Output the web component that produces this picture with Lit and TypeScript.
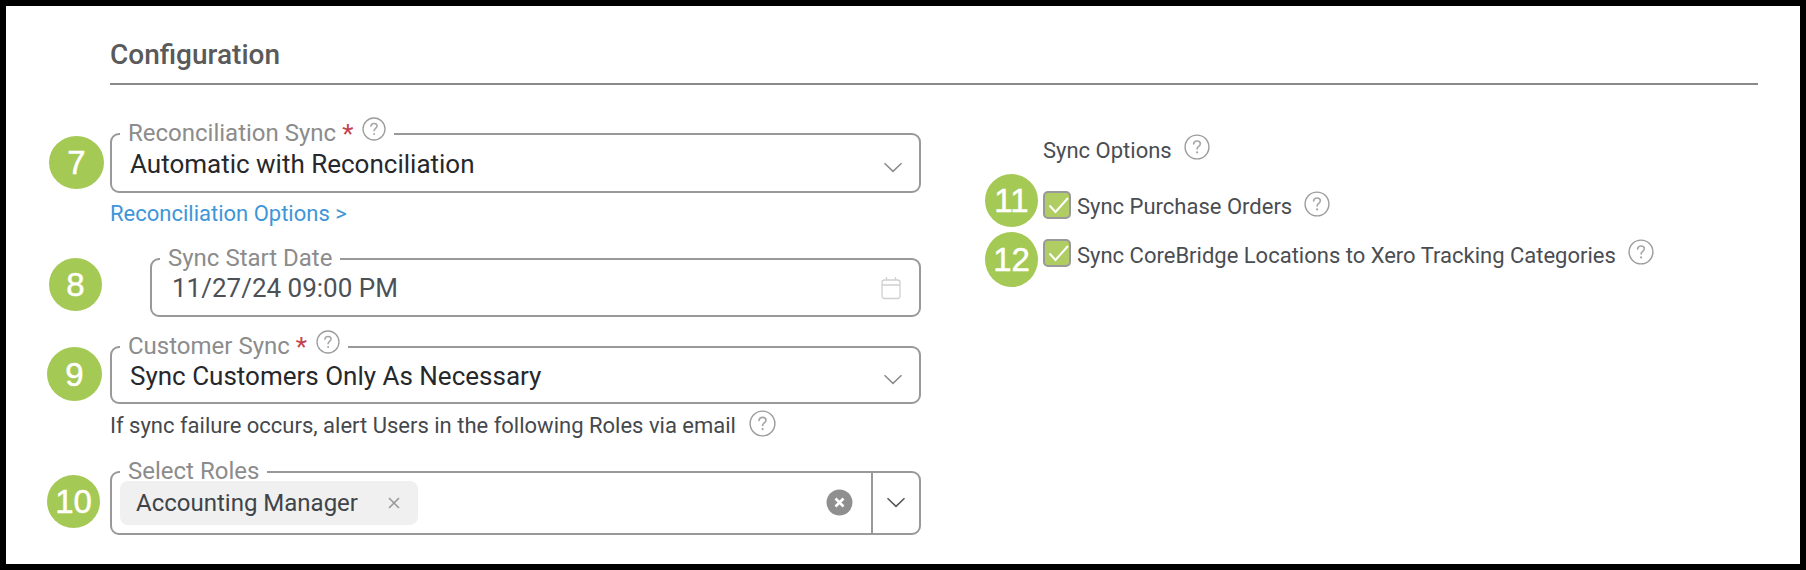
import { LitElement, html, css, svg } from "lit";
import { customElement } from "lit/decorators.js";

const helpIcon = (size: number) => html`<svg class="help" width=${size} height=${size} viewBox="0 0 24 24" fill="none">
  <circle cx="12" cy="12" r="11" stroke="#9c9c9c" stroke-width="1.3"></circle>
  <path d="M8.9 9.2c.2-1.7 1.4-2.7 3.1-2.7 1.8 0 3.1 1.1 3.1 2.6 0 2.3-3 2.4-3 4.7" stroke="#a6a6a6" stroke-width="1.5" stroke-linecap="round"></path>
  <circle cx="12.1" cy="17" r="1" fill="#a6a6a6"></circle>
</svg>`;

const chevron = (color: string) => html`<svg class="chevron" width="20" height="11" viewBox="0 0 20 11" fill="none">
  <path d="M1.5 1.2 10 9.4l8.5-8.2" stroke=${color} stroke-width="1.5"></path>
</svg>`;

const checkMark = svg`<path d="M4.5 12.5 10.5 19 23 5" stroke="#fff" stroke-width="2" fill="none"></path>`;

@customElement("app-root")
export class AppRoot extends LitElement {
  static styles = css`
    :host {
      display: block;
      box-sizing: border-box;
      width: 1806px;
      height: 570px;
      border: 6px solid #000;
      background: #fff;
      font-family: Roboto, "Liberation Sans", sans-serif;
      overflow: hidden;
    }
    .head {
      margin: 0 42px 0 104px;
      height: 77px;
      border-bottom: 2px solid #8a8a8a;
    }
    .head h2 {
      margin: 0;
      padding-top: 31px;
      font-size: 28px;
      line-height: 36px;
      font-weight: 500;
      color: #5a5a5a;
    }
    .body {
      display: flex;
      padding-left: 41px;
    }
    .left {
      width: 874px;
      padding-top: 36px;
    }
    .right {
      margin-left: 64px;
      padding-top: 52px;
    }
    .row {
      display: flex;
      align-items: flex-start;
    }
    .badge {
      flex: none;
      display: flex;
      align-items: center;
      justify-content: center;
      border-radius: 50%;
      background: #a5c955;
      color: #fff;
      font-family: "Liberation Sans", Arial, sans-serif;
      font-size: 33px;
      line-height: 1;
      -webkit-text-stroke: 0.5px #fff;
    }
    .b7 { width: 55px; height: 53px; margin: 15px 6px 0 2px; }
    .b8 { width: 53px; height: 53px; margin: 12px 8px 0 2px; }
    .b9 { width: 55px; height: 54px; margin: 13px 8px 0 0; }
    .b10 { width: 53px; height: 53px; margin: 16px 10px 0 0; }
    .b11 { width: 53px; height: 53px; margin-right: 5px; }
    .b12 { width: 53px; height: 55px; margin-right: 5px; }

    fieldset {
      flex: 1;
      min-width: 0;
      margin: 0;
      padding: 0;
      border: 2px solid #999;
      border-radius: 9px;
    }
    legend {
      display: flex;
      align-items: center;
      height: 26px;
      margin-left: 8px;
      padding: 0 8px;
      font-size: 24px;
      line-height: 24px;
      color: #8c8c8c;
    }
    legend .name {
      margin-top: -2px;
    }
    legend .star {
      margin-left: 6px;
      color: #c4424f;
      font-size: 26px;
      line-height: 18px;
      height: 18px;
    }
    legend .help {
      margin: -10px 0 0 9px;
    }
    .value {
      display: flex;
      align-items: center;
      justify-content: space-between;
      height: 30px;
      padding: 2px 16px 12px 18px;
      font-size: 26px;
      line-height: 30px;
      color: #26282b;
    }
    .value.date {
      color: #4c5157;
      height: 32px;
      padding: 0 18px 11px 20px;
    }
    .value.cust {
      height: 32px;
      padding: 0 16px 10px 18px;
    }
    .chevron {
      margin-top: 6px;
    }
    .link {
      margin: 9px 0 0 63px;
      font-size: 22px;
      line-height: 24px;
      color: #3e96d8;
    }
    .date-row {
      margin-top: 20px;
    }
    .date-row fieldset {
      margin-left: 40px;
    }
    .cust-row {
      margin-top: 17px;
    }
    .note {
      display: flex;
      align-items: center;
      margin: 8px 0 0 63px;
      height: 26px;
      font-size: 22px;
      color: #45484c;
    }
    .note .help {
      margin: -4px 0 0 13px;
    }
    .roles-row {
      margin-top: 21px;
    }
    .roles {
      display: flex;
      align-items: flex-start;
      height: 48px;
    }
    .chip {
      display: flex;
      align-items: center;
      justify-content: space-between;
      box-sizing: border-box;
      width: 298px;
      height: 44px;
      margin: -4px 0 0 8px;
      padding: 0 17px 0 16px;
      border-radius: 8px;
      background: #f0f0f0;
      font-size: 24px;
      color: #3f4449;
    }
    .clear {
      margin: 4px 18px 0 auto;
    }
    .toggle {
      display: flex;
      align-items: center;
      justify-content: center;
      box-sizing: border-box;
      width: 48px;
      height: 61px;
      margin-top: -13px;
      border-left: 2px solid #999;
    }
    .toggle .chevron {
      margin: 0;
    }
    .options {
      display: flex;
      align-items: center;
      height: 26px;
      margin-left: 58px;
      font-size: 22px;
      color: #4a4d51;
    }
    .options .help {
      margin: -7px 0 0 12px;
    }
    .opt {
      display: flex;
      align-items: center;
      font-size: 22px;
      color: #4a4d51;
    }
    .opt .help {
      margin-left: 12px;
    }
    .box {
      flex: none;
      box-sizing: border-box;
      width: 28px;
      height: 28px;
      margin-right: 6px;
      border: 2px solid #999;
      border-radius: 5px;
      background: #afcd62;
    }
    .box svg {
      display: block;
    }
    .opt-po {
      margin-top: 11px;
    }
    .opt-po .opt {
      margin-top: 17px;
    }
    .opt-po .label {
      margin-top: 3px;
    }
    .opt-po .help {
      margin-top: -2px;
    }
    .opt-loc {
      margin-top: 5px;
    }
    .opt-loc .opt {
      margin-top: 6px;
    }
    .opt-loc .label {
      margin-top: 5px;
    }
    .opt-loc .help {
      margin-top: -3px;
    }
  `;

  render() {
    return html`
      <div class="head"><h2>Configuration</h2></div>
      <div class="body">
        <div class="left">
          <div class="row">
            <div class="badge b7">7</div>
            <fieldset>
              <legend><span class="name">Reconciliation Sync</span><span class="star">*</span>${helpIcon(24)}</legend>
              <div class="value">Automatic with Reconciliation ${chevron("#8c8c8c")}</div>
            </fieldset>
          </div>
          <div class="link">Reconciliation Options &gt;</div>
          <div class="row date-row">
            <div class="badge b8">8</div>
            <fieldset>
              <legend><span class="name">Sync Start Date</span></legend>
              <div class="value date">
                11/27/24 09:00 PM
                <svg width="20" height="24" viewBox="0 0 20 24" fill="none" stroke="#d0d0d0" stroke-width="1.3">
                  <rect x="1" y="4" width="18" height="18.5" rx="2.5"></rect>
                  <path d="M1 9h18M5.5 1v3M14.5 1v3"></path>
                </svg>
              </div>
            </fieldset>
          </div>
          <div class="row cust-row">
            <div class="badge b9">9</div>
            <fieldset>
              <legend><span class="name">Customer Sync</span><span class="star">*</span>${helpIcon(24)}</legend>
              <div class="value cust">Sync Customers Only As Necessary ${chevron("#8c8c8c")}</div>
            </fieldset>
          </div>
          <div class="note">If sync failure occurs, alert Users in the following Roles via email ${helpIcon(27)}</div>
          <div class="row roles-row">
            <div class="badge b10">10</div>
            <fieldset>
              <legend><span class="name">Select Roles</span></legend>
              <div class="roles">
                <div class="chip">
                  Accounting Manager
                  <svg width="14" height="14" viewBox="0 0 14 14" stroke="#999" stroke-width="1.6"><path d="M2 2l10 10M12 2 2 12"></path></svg>
                </div>
                <svg class="clear" width="27" height="27" viewBox="0 0 27 27">
                  <circle cx="13.5" cy="13.5" r="13" fill="#8f8f8f"></circle>
                  <path d="M9.5 9.5l8 8M17.5 9.5l-8 8" stroke="#fff" stroke-width="2.6"></path>
                </svg>
                <div class="toggle">${chevron("#555")}</div>
              </div>
            </fieldset>
          </div>
        </div>
        <div class="right">
          <div class="options">Sync Options ${helpIcon(26)}</div>
          <div class="row opt-po">
            <div class="badge b11">11</div>
            <div class="opt">
              <div class="box"><svg width="24" height="24" viewBox="0 0 24 24">${checkMark}</svg></div>
              <span class="label">Sync Purchase Orders</span>${helpIcon(26)}
            </div>
          </div>
          <div class="row opt-loc">
            <div class="badge b12">12</div>
            <div class="opt">
              <div class="box"><svg width="24" height="24" viewBox="0 0 24 24">${checkMark}</svg></div>
              <span class="label">Sync CoreBridge Locations to Xero Tracking Categories</span>${helpIcon(26)}
            </div>
          </div>
        </div>
      </div>
    `;
  }
}
